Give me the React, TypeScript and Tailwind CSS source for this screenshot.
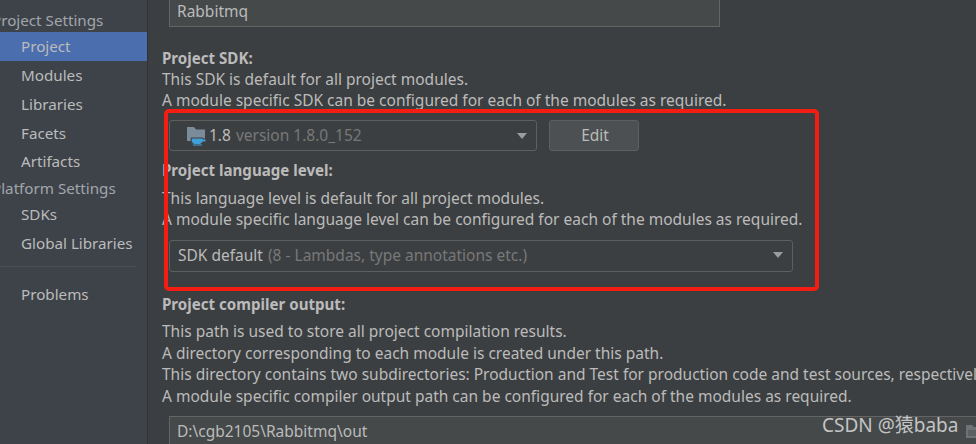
import React from "react";

const navTop = ["Modules", "Libraries", "Facets"];

const Caret: React.FC = () => (
  <span className="ml-auto h-0 w-0 border-x-[5.5px] border-t-[6px] border-x-transparent border-t-[#9a9d9f]" />
);

const JdkIcon: React.FC = () => (
  <svg width="20" height="20" viewBox="0 0 20 20" className="shrink-0">
    <path d="M0 1h7l2 2.500h9V15H0z" fill="#7c8b99" />
    <path d="M4 12h12v1h3v3h-3.500a3.500 3.500 0 0 1-3 2.500H8a3.500 3.500 0 0 1-3.500-3z" fill="#3ea0d6" stroke="#3c3f41" strokeWidth="1" />
    <path d="M6 19h9" stroke="#3ea0d6" strokeWidth="1" />
  </svg>
);

const FolderIcon: React.FC = () => (
  <svg width="16" height="13" viewBox="0 0 16 13" className="ml-auto shrink-0">
    <path d="M0 0h6l2 2h8v11H0z" fill="#6e7275" />
    <path d="M2 5h14v6H2z" fill="#5c6062" />
  </svg>
);

const App: React.FC = () => {
  return (
    <div className="relative flex h-[444px] w-[976px] overflow-hidden bg-[#3c3f41] font-['Noto_Sans',sans-serif] text-[15.5px] leading-[21px] text-[#bbbbbb]">
      <aside className="flex w-[148px] shrink-0 flex-col border-r border-[#323232] bg-[#3e434a] pt-[10px] text-[15.2px]">
        <div className="-ml-[8px] whitespace-nowrap text-[#a2a6aa]">Project Settings</div>
        <div className="mt-[1px] h-[29px] bg-[#4b6eaf] pl-[21px] leading-[29px]">Project</div>
        {navTop.map((item) => (
          <div key={item} className="h-[29px] pl-[21px] leading-[29px]">
            {item}
          </div>
        ))}
        <div className="h-[28px] pl-[21px] leading-[27px]">Artifacts</div>
        <div className="-ml-[8px] mt-[2px] whitespace-nowrap text-[#a2a6aa]">Platform Settings</div>
        <div className="mt-[1px] h-[28px] pl-[21px] leading-[28px]">SDKs</div>
        <div className="h-[30px] pl-[21px] leading-[30px]">Global Libraries</div>
        <div className="mr-[10px] mt-[8px] border-t border-[#4a4e53]" />
        <div className="mt-[13px] h-[29px] pl-[21px] leading-[29px]">Problems</div>
      </aside>

      <main className="min-w-0 flex-1 whitespace-nowrap pl-[14px]">
        <div className="-mt-[4px] ml-[7px] flex h-[31px] w-[551px] items-center border border-[#646464] bg-[#45494a] pl-[7px]">
          Rabbitmq
        </div>

        <div className="mt-[21px] text-[15.1px] font-bold">Project SDK:</div>
        <div>This SDK is default for all project modules.</div>
        <div>A module specific SDK can be configured for each of the modules as required.</div>

        <div className="ml-[7px] mt-[9px] flex items-center gap-[12px]">
          <div className="flex h-[31px] w-[368px] items-center rounded-[3px] border border-[#5e6060] pl-[17px] pr-[9px]">
            <JdkIcon />
            <span className="ml-[2px]">1.8</span>
            <span className="ml-[5px] text-[#787878]">version 1.8.0_152</span>
            <Caret />
          </div>
          <button className="h-[31px] w-[90px] rounded-[3px] border border-[#5e6060] bg-[#4c5052] pl-[2px] text-[#bbbbbb]">
            Edit
          </button>
        </div>

        <div className="mt-[9px] text-[15.1px] font-bold">Project language level:</div>
        <div className="mt-[7px]">This language level is default for all project modules.</div>
        <div>A module specific language level can be configured for each of the modules as required.</div>

        <div className="ml-[7px] mt-[10px] flex h-[32px] w-[624px] items-center rounded-[3px] border border-[#5e6060] pb-[2px] pl-[8px] pr-[9px]">
          <span>SDK default</span>
          <span className="ml-[5px] text-[#787878]">(8 - Lambdas, type annotations etc.)</span>
          <Caret />
        </div>

        <div className="mt-[22px] text-[15.1px] font-bold">Project compiler output:</div>
        <div className="mt-[6px] leading-[21.6px]">
          <div>This path is used to store all project compilation results.</div>
          <div>A directory corresponding to each module is created under this path.</div>
          <div>This directory contains two subdirectories: Production and Test for production code and test sources, respectively.</div>
          <div>A module specific compiler output path can be configured for each of the modules as required.</div>
        </div>

        <div className="ml-[7px] mt-[9px] flex h-[30px] w-[830px] items-center border border-[#646464] bg-[#45494a] pl-[7px] pr-[16px]">
          D:\cgb2105\Rabbitmq\out
          <FolderIcon />
        </div>
      </main>

      {/* red annotation drawn on top of the screenshot */}
      <div className="absolute left-[164px] top-[109px] h-[182px] w-[655px] rounded-[5px] border-[4px] border-[#f51c12]" />

      <div className="absolute left-[822px] top-[412px] font-['Noto_Sans','Noto_Sans_CJK_SC',sans-serif] text-[19px] leading-[26px] text-[#c4c4c4]">
        CSDN @猿baba
      </div>
    </div>
  );
};

export default App;
